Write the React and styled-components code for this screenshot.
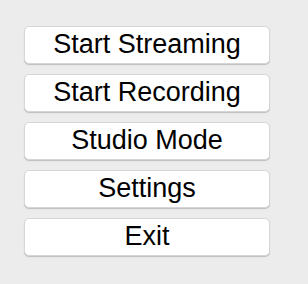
import React from "react";
import styled, { createGlobalStyle } from "styled-components";

const GlobalStyle = createGlobalStyle`
    html, body {
        margin: 0;
        padding: 0;
        background: #ececec;
    }
`

const Panel = styled.div`
    width: 308px;
    height: 284px;
    box-sizing: border-box;
    padding: 26px 38px 0 24px;
    display: flex;
    flex-direction: column;
    gap: 10px;
    background: #ececec;
    font-family: "Liberation Sans", Arial, sans-serif;
`

const MenuButton = styled.button`
    height: 38px;
    width: 246px;
    box-sizing: border-box;
    border: 1px solid #d6d6d6;
    border-radius: 5px;
    background: #ffffff;
    box-shadow: 0 1px 1px rgba(0, 0, 0, 0.2);
    font-family: inherit;
    font-size: 27px;
    line-height: 30px;
    color: #000;
    padding: 0 0 3px;
    cursor: pointer;
`

const items = ["Start Streaming", "Start Recording", "Studio Mode", "Settings", "Exit"];

export default function App() {
    return (
        <>
            <GlobalStyle />
            <Panel>
                {items.map((label) => (
                    <MenuButton key={label}>{label}</MenuButton>
                ))}
            </Panel>
        </>
    )
}
